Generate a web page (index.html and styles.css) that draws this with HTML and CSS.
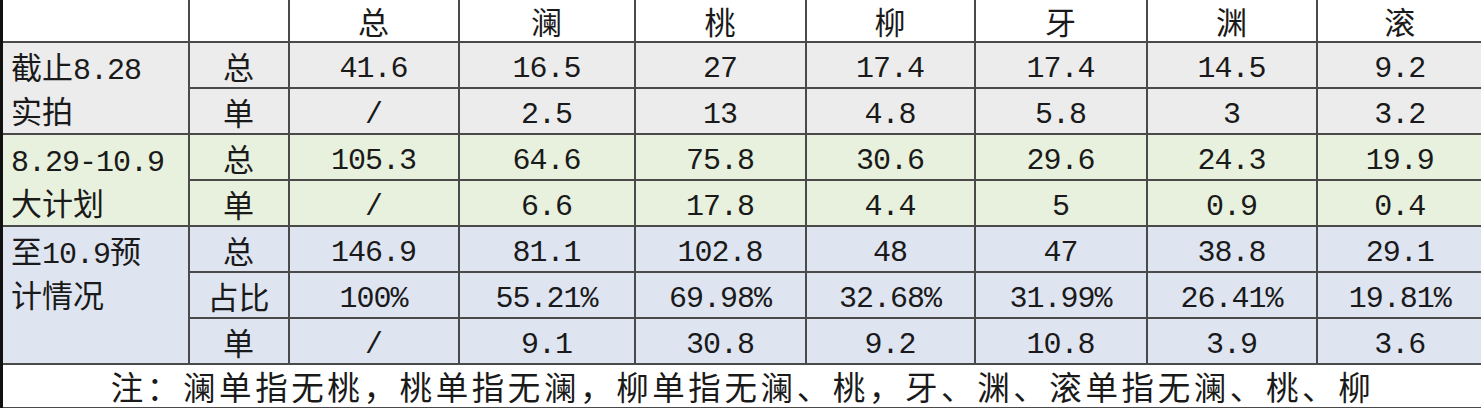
FILE: index.html
```html
<!DOCTYPE html>
<html lang="zh-CN">
<head>
<meta charset="utf-8">
<title>统计表</title>
<link rel="stylesheet" href="styles.css">
</head>
<body>
<table class="sheet">
  <colgroup>
    <col class="c-label"><col class="c-kind">
    <col class="c-a"><col class="c-b"><col class="c-c"><col class="c-d"><col class="c-e"><col class="c-f"><col class="c-g">
  </colgroup>
  <thead>
    <tr class="head">
      <th></th><th></th>
      <th>总</th><th>澜</th><th>桃</th><th>柳</th><th>牙</th><th>渊</th><th>滚</th>
    </tr>
  </thead>
  <tbody class="grey">
    <tr class="r46">
      <td class="label" rowspan="2"><div class="line">截止<span class="ln">8.28</span></div><div class="line">实拍</div></td>
      <td class="kind">总</td>
      <td class="n">41.6</td><td class="n">16.5</td><td class="n">27</td><td class="n">17.4</td><td class="n">17.4</td><td class="n">14.5</td><td class="n">9.2</td>
    </tr>
    <tr class="r45">
      <td class="kind">单</td>
      <td class="n">/</td><td class="n">2.5</td><td class="n">13</td><td class="n">4.8</td><td class="n">5.8</td><td class="n">3</td><td class="n">3.2</td>
    </tr>
  </tbody>
  <tbody class="green">
    <tr class="r45">
      <td class="label" rowspan="2"><div class="line"><span class="ln">8.29-10.9</span></div><div class="line">大计划</div></td>
      <td class="kind">总</td>
      <td class="n">105.3</td><td class="n">64.6</td><td class="n">75.8</td><td class="n">30.6</td><td class="n">29.6</td><td class="n">24.3</td><td class="n">19.9</td>
    </tr>
    <tr class="r46">
      <td class="kind">单</td>
      <td class="n">/</td><td class="n">6.6</td><td class="n">17.8</td><td class="n">4.4</td><td class="n">5</td><td class="n">0.9</td><td class="n">0.4</td>
    </tr>
  </tbody>
  <tbody class="blue">
    <tr class="r46">
      <td class="label" rowspan="3"><div class="line">至<span class="ln">10.9</span>预</div><div class="line">计情况</div></td>
      <td class="kind">总</td>
      <td class="n">146.9</td><td class="n">81.1</td><td class="n">102.8</td><td class="n">48</td><td class="n">47</td><td class="n">38.8</td><td class="n">29.1</td>
    </tr>
    <tr class="r46">
      <td class="kind">占比</td>
      <td class="n">100%</td><td class="n">55.21%</td><td class="n">69.98%</td><td class="n">32.68%</td><td class="n">31.99%</td><td class="n">26.41%</td><td class="n">19.81%</td>
    </tr>
    <tr class="r46">
      <td class="kind">单</td>
      <td class="n">/</td><td class="n">9.1</td><td class="n">30.8</td><td class="n">9.2</td><td class="n">10.8</td><td class="n">3.9</td><td class="n">3.6</td>
    </tr>
  </tbody>
  <tfoot>
    <tr class="note-row">
      <td class="note" colspan="9">注：澜单指无桃，桃单指无澜，柳单指无澜、桃，牙、渊、滚单指无澜、桃、柳</td>
    </tr>
  </tfoot>
</table>
</body>
</html>
```

FILE: styles.css
```css
html, body {
  margin: 0;
  padding: 0;
  background: #ffffff;
}

body {
  width: 1481px;
  height: 408px;
  overflow: hidden;
  font-family: "Noto Sans CJK SC", "Noto Sans", sans-serif;
  color: #1a1a1a;
}

.sheet {
  width: 1481px;
  table-layout: fixed;
  border-collapse: collapse;
  border-left: 3px solid #111;
}

.c-label { width: 187px; }
.c-kind { width: 100px; }
.c-a { width: 170px; }
.c-b { width: 176px; }
.c-c { width: 171px; }
.c-d { width: 169px; }
.c-e { width: 172px; }
.c-f { width: 170px; }
.c-g { width: 166px; }

.sheet th,
.sheet td {
  border: 2px solid #4a4a4a;
  padding: 0;
  text-align: center;
  vertical-align: middle;
  font-size: 31px;
  font-weight: 400;
  line-height: 34px;
  white-space: nowrap;
}

.sheet thead th {
  border-top: none;
  background: #ffffff;
  padding-top: 0;
}

.head { height: 42px; }
.r46 { height: 46px; }
.r45 { height: 45px; }

.grey td { background: #ececec; }
.green td { background: #e8f1dd; }
.blue td { background: #dfe4f1; }

.sheet td.label {
  text-align: left;
  vertical-align: top;
  padding: 0 0 0 8px;
  font-size: 31px;
  line-height: 1;
}

.line {
  height: 45px;
  line-height: 45px;
}

.line:first-child {
  height: 44px;
}

.ln {
  font-family: "Liberation Mono", "DejaVu Sans Mono", monospace;
  font-size: 30px;
  letter-spacing: -1px;
}

.sheet td.kind {
  padding-top: 1px;
}

.sheet td.n {
  font-family: "Liberation Mono", "DejaVu Sans Mono", monospace;
  font-size: 30px;
  letter-spacing: -1px;
  vertical-align: top;
  padding-top: 8px;
  line-height: 36px;
}

.note-row { height: 44px; }

.sheet td.note {
  background: #ffffff;
  font-size: 32.5px;
  letter-spacing: 3.6px;
  border-right: none;
  padding-top: 0;
}

.sheet tr > :last-child {
  border-right: 1px solid #9a9a9a;
}
```
